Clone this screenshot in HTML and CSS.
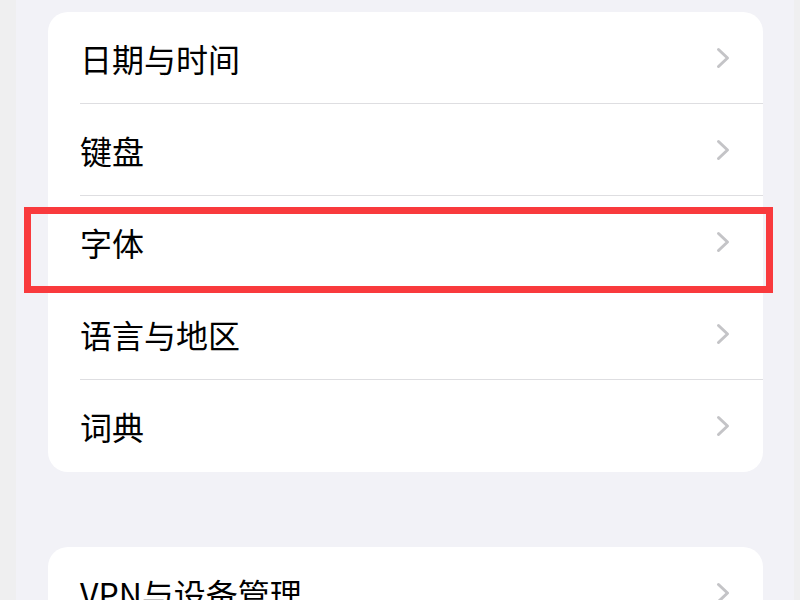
FILE: index.html
```html
<!DOCTYPE html>
<html>
<head>
    <title>通用</title>
    <link rel="stylesheet" href="styles.css">
</head>
<body>
    <div class="screen">
        <div class="group">
            <div class="row"><span class="label">日期与时间</span><svg class="chevron" viewBox="0 0 14 22"><path d="M2.5 2.5 L11.5 11 L2.5 19.5"/></svg></div>
            <div class="row"><span class="label">键盘</span><svg class="chevron" viewBox="0 0 14 22"><path d="M2.5 2.5 L11.5 11 L2.5 19.5"/></svg></div>
            <div class="row"><span class="label">字体</span><svg class="chevron" viewBox="0 0 14 22"><path d="M2.5 2.5 L11.5 11 L2.5 19.5"/></svg></div>
            <div class="row"><span class="label">语言与地区</span><svg class="chevron" viewBox="0 0 14 22"><path d="M2.5 2.5 L11.5 11 L2.5 19.5"/></svg></div>
            <div class="row"><span class="label">词典</span><svg class="chevron" viewBox="0 0 14 22"><path d="M2.5 2.5 L11.5 11 L2.5 19.5"/></svg></div>
        </div>

        <div class="group">
            <div class="row"><span class="label">VPN与设备管理</span><svg class="chevron" viewBox="0 0 14 22"><path d="M2.5 2.5 L11.5 11 L2.5 19.5"/></svg></div>
        </div>
    </div>

    <!-- highlight around the font row -->
    <div class="highlight"></div>
</body>
</html>
```

FILE: styles.css
```css
body {
    margin: 0;
    padding: 0;
    background-color: #efeff0;
    font-family: "Noto Sans CJK SC", "Noto Sans", sans-serif;
    height: 600px;
    overflow: hidden;
}

.screen {
    margin: 0 6px 0 16px;
    padding: 12px 31px 0 32px;
    height: 600px;
    box-sizing: border-box;
    background-color: #f2f2f7;
    display: flex;
    flex-direction: column;
    gap: 75px;
}

.group {
    background-color: #fff;
    border-radius: 20px;
    flex-shrink: 0;
}

.row {
    height: 92px;
    margin-left: 32px;
    padding-right: 33px;
    display: flex;
    align-items: center;
    justify-content: space-between;
    border-bottom: 1px solid #dedee1;
    box-sizing: border-box;
}

.row:last-child {
    border-bottom: none;
}

.label {
    font-size: 32px;
    color: #000;
    line-height: 1;
}

.chevron {
    width: 14px;
    height: 22px;
}

.chevron path {
    fill: none;
    stroke: #c4c4c7;
    stroke-width: 3;
    stroke-linecap: round;
    stroke-linejoin: round;
}

.highlight {
    position: absolute;
    left: 24px;
    top: 207px;
    width: 749px;
    height: 86px;
    border: 7px solid #f93a3d;
    box-sizing: border-box;
}
```
